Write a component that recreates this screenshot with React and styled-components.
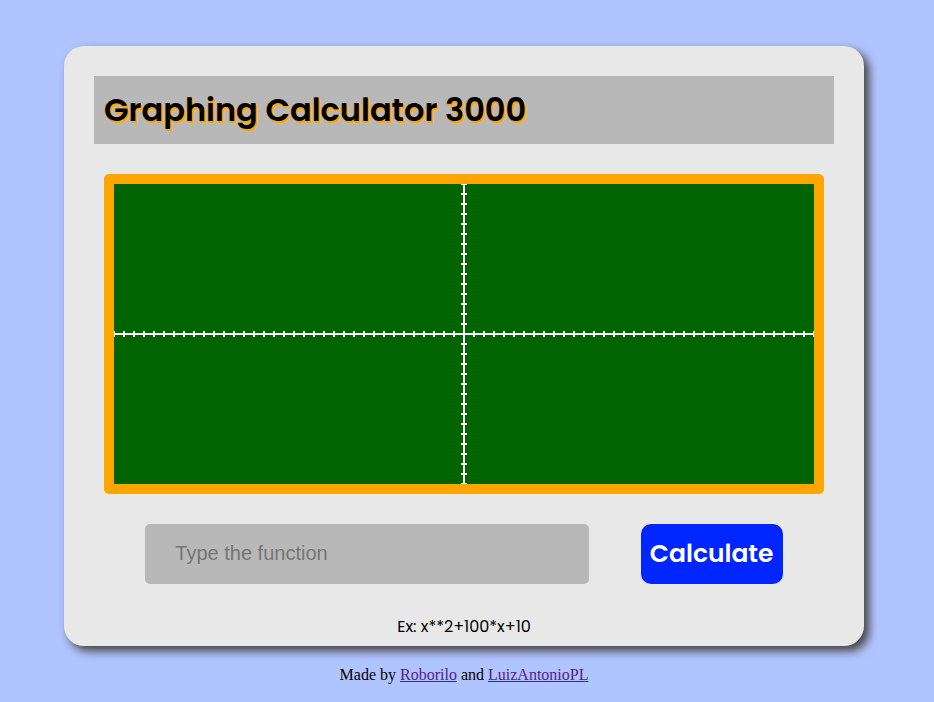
import React from "react";
import styled, { createGlobalStyle } from "styled-components";

const GlobalStyle = createGlobalStyle`
  * { box-sizing: border-box; }
  body {
    margin: 0;
    background: #b0c4ff;
    font-family: "Liberation Serif", serif;
    font-size: 16px;
    color: #000;
  }
`;

const Page = styled.div`
  display: flex;
  flex-direction: column;
  align-items: center;
  padding: 46px 26px 16px 20px;
`;

const Card = styled.main`
  width: 100%;
  max-width: 800px;
  padding: 30px 30px 7px;
  display: flex;
  flex-direction: column;
  border-radius: 20px;
  background: #e8e8e8;
  box-shadow: 5px 5px 10px #444;
  font-family: Poppins, "Open Sans", sans-serif;
`;

const Header = styled.header`
  padding: 10px;
  background: #b8b8b8;
`;

const Title = styled.h1`
  margin: 0;
  font-size: 32px;
  line-height: 48px;
  font-weight: 600;
  text-shadow: 0 0 orange, 1px 1px orange, 2px 2px orange;
`;

const Screen = styled.svg`
  display: block;
  width: calc(100% - 20px);
  margin: 30px 10px;
  border: 10px solid orange;
  border-radius: 5px;
  background: #006400;
`;

const Form = styled.form`
  display: flex;
  justify-content: space-evenly;
`;

const FunctionInput = styled.input`
  width: 60%;
  height: 60px;
  padding: 0 30px 2px;
  border: 0;
  border-radius: 5px;
  background: #b8b8b8;
  font-family: "Liberation Sans", Arial, sans-serif;
  font-size: 20px;
`;

const CalculateButton = styled.button`
  width: 142px;
  height: 60px;
  padding: 0;
  border: 0;
  border-radius: 10px;
  background: #0026ff;
  color: #fff;
  font-family: inherit;
  font-size: 25px;
  font-weight: 600;
`;

const Example = styled.p`
  margin: 31px 0 0;
  text-align: center;
  font-size: 16px;
  line-height: 24px;
`;

const Credits = styled.footer`
  margin-top: 20px;
  line-height: 18px;
`;

const Link = styled.a`
  color: #551a8b;
`;

const xTicks = Array.from({ length: 71 }, (_, i) => i * 10);
const yTicks = Array.from({ length: 31 }, (_, i) => i * 10);

export default function App() {
  return (
    <>
      <GlobalStyle />
      <Page>
        <Card>
          <Header>
            <Title>Graphing Calculator 3000</Title>
          </Header>
          <Screen viewBox="0 0 700 300" role="img" aria-label="Graph axes">
            <g stroke="#fff" strokeWidth="2">
              <path d="M0 150H700M350 0V300" />
              {xTicks.map((x) => <path key={x} d={`M${x} 147V153`} />)}
              {yTicks.map((y) => <path key={y} d={`M347 ${y}H353`} />)}
            </g>
          </Screen>
          <Form onSubmit={(event) => event.preventDefault()}>
            <FunctionInput aria-label="Function" placeholder="Type the function" />
            <CalculateButton type="submit">Calculate</CalculateButton>
          </Form>
          <Example>Ex: x**2+100*x+10</Example>
        </Card>
        <Credits>
          Made by <Link href="#roborilo">Roborilo</Link> and <Link href="#luizantoniopl">LuizAntonioPL</Link>
        </Credits>
      </Page>
    </>
  );
}
